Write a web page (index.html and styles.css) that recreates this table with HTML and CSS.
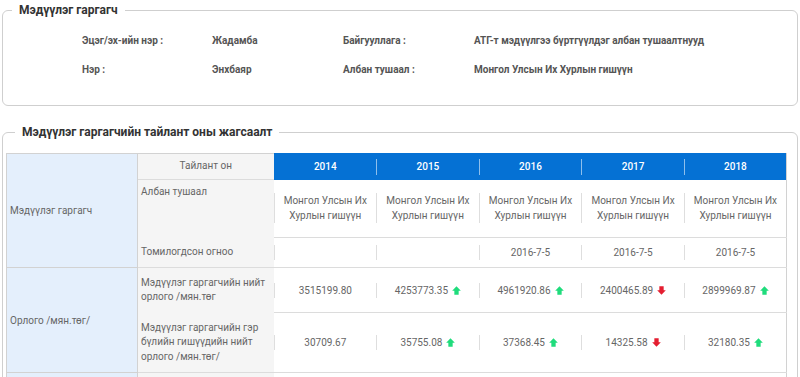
FILE: index.html
```html
<!DOCTYPE html>
<html lang="mn">
<head>
<meta charset="utf-8">
<title>Мэдүүлэг гаргагч</title>
<link rel="stylesheet" href="styles.css">
</head>
<body>
<div class="page">
  <fieldset class="box info-box">
    <legend>Мэдүүлэг гаргагч</legend>
    <div class="info">
      <span>Эцэг/эх-ийн нэр :</span><span>Жадамба</span><span>Байгууллага :</span><span>АТГ-т мэдүүлгээ бүртгүүлдэг албан тушаалтнууд</span>
      <span>Нэр :</span><span>Энхбаяр</span><span>Албан тушаал :</span><span>Монгол Улсын Их Хурлын гишүүн</span>
    </div>
  </fieldset>

  <fieldset class="box list-box">
    <legend>Мэдүүлэг гаргагчийн тайлант оны жагсаалт</legend>
    <table class="report">
      <colgroup>
        <col class="c-grp"><col class="c-sub"><col><col><col><col><col>
      </colgroup>
      <tr class="r-head">
        <td class="grp" rowspan="3">Мэдүүлэг гаргагч</td>
        <td class="sub sub-head">Тайлант он</td>
        <th class="yr"><div class="hv">2014</div></th>
        <th class="yr"><div class="hv sep">2015</div></th>
        <th class="yr"><div class="hv sep">2016</div></th>
        <th class="yr"><div class="hv sep">2017</div></th>
        <th class="yr"><div class="hv sep">2018</div></th>
      </tr>
      <tr class="r-pos">
        <td class="sub sub-top">Албан тушаал</td>
        <td class="v"><div class="val">Монгол Улсын Их<br>Хурлын гишүүн</div></td>
        <td class="v"><div class="val">Монгол Улсын Их<br>Хурлын гишүүн</div></td>
        <td class="v"><div class="val">Монгол Улсын Их<br>Хурлын гишүүн</div></td>
        <td class="v"><div class="val">Монгол Улсын Их<br>Хурлын гишүүн</div></td>
        <td class="v"><div class="val">Монгол Улсын Их<br>Хурлын гишүүн</div></td>
      </tr>
      <tr class="r-date">
        <td class="sub">Томилогдсон огноо</td>
        <td class="v"><div class="val">&nbsp;</div></td>
        <td class="v"><div class="val">&nbsp;</div></td>
        <td class="v"><div class="val">2016-7-5</div></td>
        <td class="v"><div class="val">2016-7-5</div></td>
        <td class="v"><div class="val">2016-7-5</div></td>
      </tr>
      <tr class="r-inc1 grp-start">
        <td class="grp" rowspan="2">Орлого /мян.төг/</td>
        <td class="sub">Мэдүүлэг гаргагчийн нийт орлого /мян.төг</td>
        <td class="v"><div class="val">3515199.80</div></td>
        <td class="v"><div class="val">4253773.35<svg class="arr up" viewBox="0 0 10 10"><path d="M5 0.3 L9.8 5.3 L7.4 5.3 L7.4 9.7 L2.6 9.7 L2.6 5.3 L0.2 5.3 Z"/></svg></div></td>
        <td class="v"><div class="val">4961920.86<svg class="arr up" viewBox="0 0 10 10"><path d="M5 0.3 L9.8 5.3 L7.4 5.3 L7.4 9.7 L2.6 9.7 L2.6 5.3 L0.2 5.3 Z"/></svg></div></td>
        <td class="v"><div class="val">2400465.89<svg class="arr down" viewBox="0 0 10 10"><path d="M5 9.7 L9.8 4.7 L7.4 4.7 L7.4 0.3 L2.6 0.3 L2.6 4.7 L0.2 4.7 Z"/></svg></div></td>
        <td class="v"><div class="val">2899969.87<svg class="arr up" viewBox="0 0 10 10"><path d="M5 0.3 L9.8 5.3 L7.4 5.3 L7.4 9.7 L2.6 9.7 L2.6 5.3 L0.2 5.3 Z"/></svg></div></td>
      </tr>
      <tr class="r-inc2">
        <td class="sub">Мэдүүлэг гаргагчийн гэр бүлийн гишүүдийн нийт орлого /мян.төг/</td>
        <td class="v"><div class="val">30709.67</div></td>
        <td class="v"><div class="val">35755.08<svg class="arr up" viewBox="0 0 10 10"><path d="M5 0.3 L9.8 5.3 L7.4 5.3 L7.4 9.7 L2.6 9.7 L2.6 5.3 L0.2 5.3 Z"/></svg></div></td>
        <td class="v"><div class="val">37368.45<svg class="arr up" viewBox="0 0 10 10"><path d="M5 0.3 L9.8 5.3 L7.4 5.3 L7.4 9.7 L2.6 9.7 L2.6 5.3 L0.2 5.3 Z"/></svg></div></td>
        <td class="v"><div class="val">14325.58<svg class="arr down" viewBox="0 0 10 10"><path d="M5 9.7 L9.8 4.7 L7.4 4.7 L7.4 0.3 L2.6 0.3 L2.6 4.7 L0.2 4.7 Z"/></svg></div></td>
        <td class="v"><div class="val">32180.35<svg class="arr up" viewBox="0 0 10 10"><path d="M5 0.3 L9.8 5.3 L7.4 5.3 L7.4 9.7 L2.6 9.7 L2.6 5.3 L0.2 5.3 Z"/></svg></div></td>
      </tr>
      <tr class="r-next grp-start">
        <td class="grp">&nbsp;</td>
        <td class="sub">&nbsp;</td>
        <td class="v"></td><td class="v"></td><td class="v"></td><td class="v"></td><td class="v"></td>
      </tr>
    </table>
  </fieldset>
</div>
</body>
</html>
```

FILE: styles.css
```css
html, body {
  margin: 0;
  padding: 0;
  background: #fff;
}
body {
  font-family: Roboto, "Noto Sans", "DejaVu Sans", sans-serif;
  color: #555;
  overflow: hidden;
}
.page {
  padding: 2px 2px 0 2px;
}
.box {
  border: 1px solid #cfcfcf;
  border-radius: 6px;
  margin: 0;
  min-width: 0;
}
.box legend {
  font-size: 12px;
  font-weight: 700;
  line-height: 16px;
  color: #333;
  padding: 0 7px;
  margin-left: 9px;
}
.info-box {
  padding: 8px 0 21px 0;
}
.info {
  display: grid;
  grid-template-columns: 130px 131px 131px auto;
  grid-auto-rows: 29px;
  align-items: center;
  padding-left: 79px;
  font-size: 10px;
  font-weight: 700;
  color: #555;
}
.list-box {
  margin-top: 18px;
  padding: 13px 10px 0 3px;
}
.report {
  width: 100%;
  border-collapse: collapse;
  table-layout: fixed;
  font-size: 10px;
  color: #666;
}
.c-grp { width: 131px; }
.c-sub { width: 136px; }
.report td, .report th {
  padding: 0;
  vertical-align: middle;
}
.grp {
  background: #e4effc;
  border: 1px solid #d2d2d2;
  padding: 0 3px !important;
  text-align: left;
}
.sub {
  background: #f5f5f5;
  padding: 0 3px !important;
  line-height: 14.5px;
  text-align: left;
}
.sub-head {
  text-align: center;
  border-top: 1px solid #d2d2d2;
  border-bottom: 1px solid #dcdcdc;
}
.sub-top {
  vertical-align: top !important;
  padding-top: 5px !important;
}
.yr {
  background: #0571d4;
  color: #fff;
  font-weight: 500;
  border-top: 1px solid #0571d4;
}
.yr:last-child { border-right: 1px solid #d2d2d2; }
.hv {
  line-height: 16px;
  border-left: 1px solid transparent;
}
.hv.sep {
  border-left-color: rgba(255, 255, 255, 0.55);
}
.v {
  border-bottom: 1px solid #dcdcdc;
  text-align: center;
}
.v:last-child { border-right: 1px solid #d2d2d2; }
.val {
  border-left: 1px solid #dedede;
  line-height: 15px;
  display: flex;
  align-items: center;
  justify-content: center;
  flex-direction: row;
  flex-wrap: wrap;
}
.r-pos .val { display: block; }
.arr {
  width: 9px;
  height: 9px;
  margin-left: 4px;
}
.arr.up { fill: #1fdc7c; }
.arr.down { fill: #e41e30; }
.r-head { height: 26px; }
.r-pos { height: 58px; }
.r-date { height: 30px; }
.r-inc1 { height: 45px; }
.r-inc2 { height: 60px; }
.r-next { height: 40px; }
.grp-start .sub { border-top: 1px solid #dcdcdc; }
```
